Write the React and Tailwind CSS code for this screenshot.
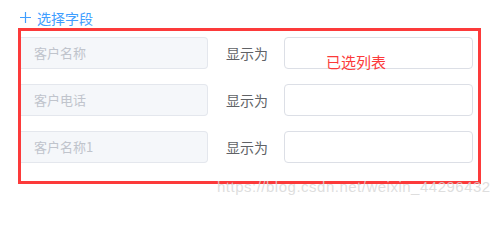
import React from "react";

const rows = ["客户名称", "客户电话", "客户名称1"];

const App = () => {
  return (
    <div className="relative w-[498px] h-[204px] bg-white overflow-hidden font-['Noto_Sans_CJK_SC','Noto_Sans',sans-serif]">
      {/* add field link */}
      <div className="h-[28px] pl-[20px] pt-[7px] flex items-center gap-[6px] text-[14px] leading-[20px] text-[#409eff]">
        <svg width="11" height="11" viewBox="0 0 11 11" className="shrink-0">
          <path d="M5.5 0v11M0 5.5h11" stroke="#409eff" strokeWidth="1.2" fill="none" />
        </svg>
        <span>选择字段</span>
      </div>

      {/* selected list, outlined in red */}
      <div className="relative ml-[18px] w-[463px] h-[156px] border-[3px] border-[#fc3a3a] pt-[6px] flex flex-col gap-[15px]">
        {rows.map((name) => (
          <div key={name} className="flex items-center h-[32px]">
            <div className="w-[187px] h-[32px] flex items-center pl-[13px] rounded-r-[4px] bg-[#f5f7fa] border border-l-0 border-[#e4e7ed] text-[13px] text-[#c0c4cc]">
              {name}
            </div>
            <div className="ml-[18px] w-[58px] text-[14px] text-[#606266]">显示为</div>
            <div className="w-[189px] h-[32px] rounded-[4px] border border-[#dcdfe6] bg-white"></div>
          </div>
        ))}
        <div className="absolute left-[305px] top-[20px] text-[15px] text-[#fc3a3a]">已选列表</div>
      </div>

      {/* watermark */}
      <div className="absolute left-[217px] top-[176px] text-[15px] font-['Liberation_Sans',sans-serif] text-[#d6d6d6]/80 tracking-[0.5px]">
        https://blog.csdn.net/weixin_44296432
      </div>
    </div>
  );
};

export default App;
